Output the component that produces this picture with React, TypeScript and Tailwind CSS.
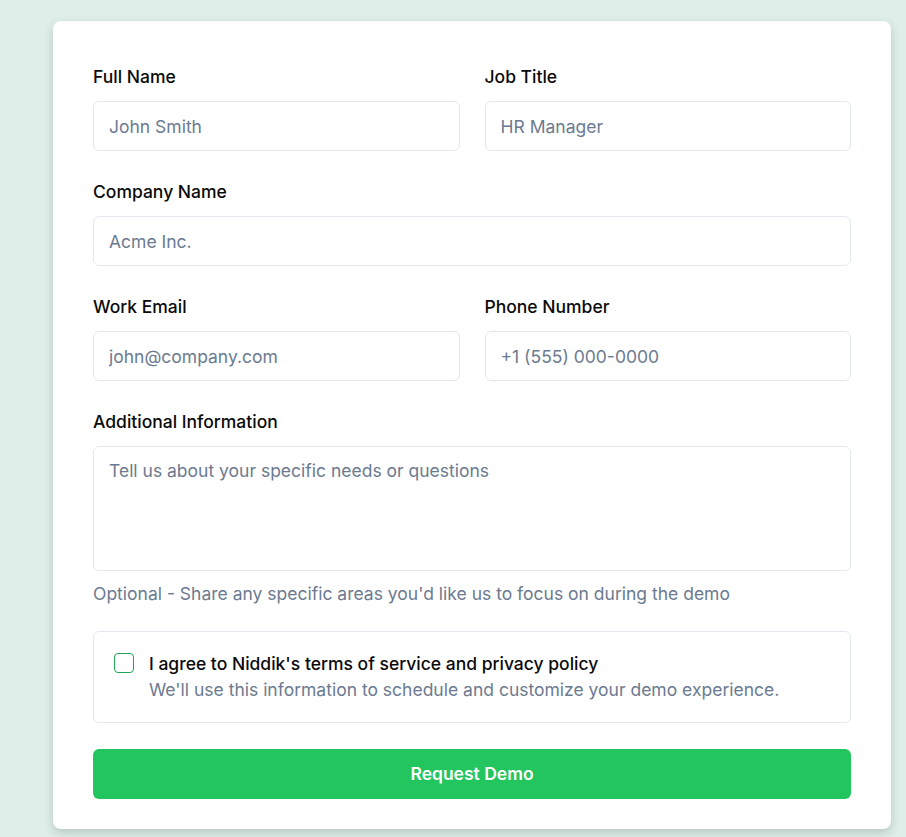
const inputCls =
  "h-[50px] w-full rounded-md border border-[#e2e8f0] bg-white px-[15px] text-[17.5px] text-[#0f172a] placeholder:text-[#6b7a90] outline-none";

const Field = ({ label, placeholder, wide }: { label: string; placeholder: string; wide?: boolean }) => (
  <div className={wide ? "col-span-2 flex flex-col" : "flex flex-col"}>
    <label className="mb-3 text-[17.5px] leading-6 font-medium text-[#0a0a0a]">{label}</label>
    <input className={inputCls} placeholder={placeholder} />
  </div>
);

export default function App() {
  return (
    <div
      className="min-h-[837px] bg-[#dfeee8] pt-[21px] pb-[9px]"
      style={{ fontFamily: "Inter, 'Noto Sans', sans-serif" }}
    >
      <div className="ml-[53px] w-[838px] rounded-lg bg-white px-10 pt-[44px] pb-[30px] shadow-[0_4px_10px_rgba(60,90,80,0.25)]">
        <div className="grid grid-cols-2 gap-x-[25px] gap-y-[29px]">
          <Field label="Full Name" placeholder="John Smith" />
          <Field label="Job Title" placeholder="HR Manager" />
          <Field label="Company Name" placeholder="Acme Inc." wide />
          <Field label="Work Email" placeholder="john@company.com" />
          <Field label="Phone Number" placeholder="+1 (555) 000-0000" />
          {/* Additional info */}
          <div className="col-span-2 flex flex-col">
            <label className="mb-3 text-[17.5px] leading-6 font-medium text-[#0a0a0a]">Additional Information</label>
            <textarea
              className="h-[125px] w-full resize-none rounded-md border border-[#e2e8f0] px-[15px] pt-[11px] text-[17.5px] text-[#0f172a] placeholder:text-[#6b7a90] outline-none"
              placeholder="Tell us about your specific needs or questions"
            />
            <span className="mt-[11px] text-[17.5px] leading-6 text-[#6b7a90]">
              Optional - Share any specific areas you'd like us to focus on during the demo
            </span>
          </div>
        </div>

        {/* Terms */}
        <div className="mt-[25px] flex flex-row gap-[15px] rounded-md border border-[#e2e8f0] px-5 pt-[19px] pb-[19px]">
          <span className="mt-[2px] h-5 w-5 shrink-0 rounded-[4px] border border-[#22a35a]" />
          <div className="flex flex-col">
            <span className="text-[17.5px] leading-[26px] font-medium text-[#0a0a0a]">
              I agree to Niddik's terms of service and privacy policy
            </span>
            <span className="text-[17.5px] leading-[26px] text-[#6b7a90]">
              We'll use this information to schedule and customize your demo experience.
            </span>
          </div>
        </div>

        <button className="mt-[26px] h-[50px] w-full rounded-md bg-[#22c55e] text-[17.5px] font-semibold text-white">
          Request Demo
        </button>
      </div>
    </div>
  );
}
